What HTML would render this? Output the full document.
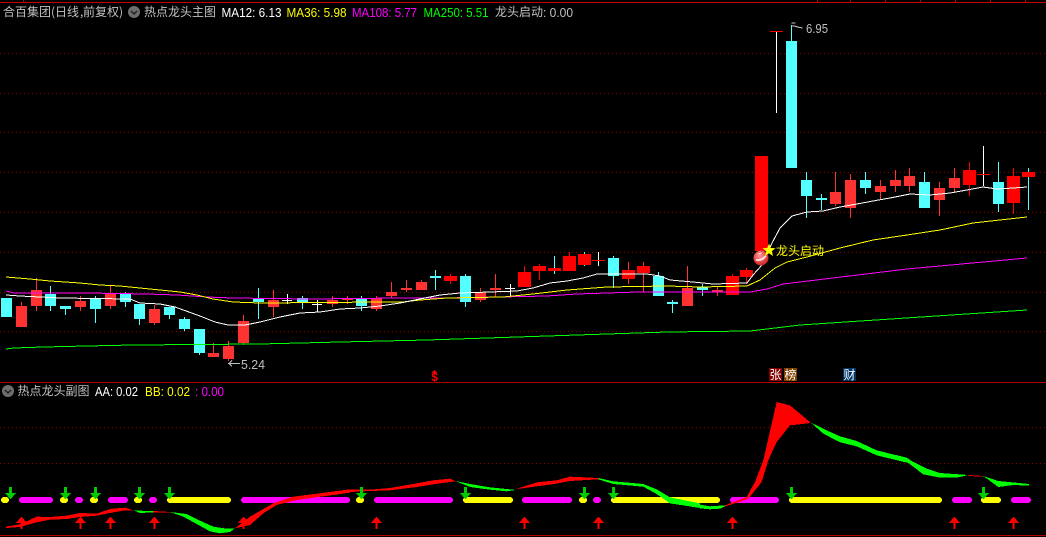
<!DOCTYPE html>
<html><head><meta charset="utf-8"><style>
html,body{margin:0;padding:0;background:#000;width:1046px;height:537px;overflow:hidden}
svg{display:block}
.t{font:12px "WenQuanYi Zen Hei","Noto Sans CJK SC",sans-serif;fill:#c0c0c0}
.m{font:13px "Liberation Sans",sans-serif}
</style></head><body>
<svg width="1046" height="537" viewBox="0 0 1046 537" xmlns="http://www.w3.org/2000/svg">
<defs>
<radialGradient id="b" cx=".42" cy=".35" r=".75"><stop offset="0" stop-color="#ff9a9a"/><stop offset=".6" stop-color="#e84040"/><stop offset="1" stop-color="#b02020"/></radialGradient>
<path id="dn" d="M-1 487h3v6h4l-5.500 6.500-5.500-6.500h4z" fill="#00cc00"/>
<path id="up" d="M-.5 529v-6h-4.500l5.500-6.500 5.500 6.500h-4.500v6z" fill="#ff0000"/>
</defs>
<rect width="1046" height="537" fill="#000"/>
<!-- borders -->
<g shape-rendering="crispEdges">
<rect x="0" y="2" width="1046" height="1" fill="#c00000"/>
<path d="M23.500 0v2M817.500 0v2M850.500 0v2M885.500 0v2M920.500 0v2M955.500 0v2M990.500 0v2M1025.500 0v2" stroke="#c00000"/>
<rect x="0" y="382" width="1046" height="1" fill="#b00000"/>
<rect x="0" y="535" width="1046" height="1" fill="#b00000"/>
<path d="M0 53.500H1046M0 93.500H1046M0 132.500H1046M0 172.500H1046M0 212.500H1046M0 252.500H1046M0 292.500H1046M0 331.500H1046M0 427.500H1046M0 463.500H1046" stroke="#8a0000" stroke-dasharray="1 3"/>
<!-- candle wicks -->
<path fill="none" stroke="#54ffff" d="M50.500 286V311M65.500 306V315M95.500 296V323M125.500 292V307M139.500 304V325M169.500 307V319M184.500 317V331M199.500 329V355M258.500 288V319M302.500 296V309M361.500 296V311M435.500 270V290M465.500 274V307M554.500 256V274M584.500 252V266M613.500 256V288M658.500 272V296M672.500 300V313M702.500 284V296M791.500 25V41M806.500 172V218M821.500 194V210M865.500 172V194M924.500 172V208M998.500 162V212M1028.500 168V210"/>
<path fill="none" stroke="#ff3232" d="M21.500 302V306M36.500 278V311M80.500 296V311M110.500 286V309M154.500 305V325M213.500 343V353M228.500 341V361M243.500 315V345M273.500 290V317M332.500 296V307M347.500 296V304M376.500 296V311M391.500 282V298M406.500 280V292M421.500 280V282M480.500 288V302M495.500 274V297M687.500 266V288M717.500 286V296M835.500 172V206M850.500 174V218M880.500 180V200M895.500 170V192M909.500 168V192M939.500 182V216M954.500 168V192M628.500 262V284M643.500 262V292"/>
<path fill="none" stroke="#ff0000" d="M450.500 274V284M524.500 266V272M539.500 264V280M569.500 252V256M732.500 274V276M746.500 268V284M969.500 162V196M1013.500 168V214"/>
<path fill="none" stroke="#fff" d="M287.500 294V304M282 300.500H292M317.500 300V312M312 304.500H322M510.500 284V296M505 288.500H515M598.500 252V266M776.500 31V113M983.500 146V186"/>
<!-- bodies -->
<path fill="#54ffff" d="M1 298h11v19h-11zM45 294h11v12h-11zM60 306h11v3h-11zM90 298h11v11h-11zM120 294h11v8h-11zM134 304h11v15h-11zM164 307h11v8h-11zM179 319h11v10h-11zM194 329h11v24h-11zM253 298h11v4h-11zM297 298h11v4h-11zM356 298h11v8h-11zM430 276h11v2h-11zM460 276h11v26h-11zM608 258h11v18h-11zM653 276h11v20h-11zM667 302h11v2h-11zM697 287h11v3h-11zM786 41h11v127h-11zM801 180h11v16h-11zM816 198h11v2h-11zM860 180h11v8h-11zM919 182h11v26h-11zM993 182h11v22h-11z"/>
<path fill="#ff3232" d="M16 306h11v21h-11zM31 290h11v16h-11zM75 301h11v6h-11zM105 293h11v13h-11zM149 309h11v14h-11zM208 353h11v4h-11zM223 346h11v13h-11zM238 321h11v22h-11zM268 300h11v7h-11zM327 300h11v4h-11zM342 298h11v2h-11zM371 298h11v11h-11zM386 292h11v4h-11zM401 288h11v2h-11zM416 282h11v8h-11zM475 292h11v8h-11zM490 288h11v2h-11zM682 288h11v18h-11zM712 290h11v2h-11zM830 192h11v12h-11zM845 180h11v28h-11zM875 186h11v6h-11zM890 180h11v6h-11zM904 176h11v10h-11zM934 188h11v12h-11zM949 178h11v10h-11z"/>
<path fill="#ff0000" d="M444 276h13v5h-13zM518 272h13v15h-13zM533 266h13v5h-13zM548 268h13v3h-13zM563 256h13v15h-13zM578 254h13v11h-13zM592 260h13v1h-13zM622 270h13v9h-13zM637 266h13v7h-13zM726 276h13v19h-13zM740 270h13v7h-13zM755 156h13v95h-13zM770 31h13v1h-13zM963 170h13v15h-13zM977 174h13v1h-13zM1007 176h13v27h-13zM1022 172h13v5h-13z"/>
<!-- moving averages -->
<polyline fill="none" stroke="#00ff00" points="6,349 14,348 43,347 87,346 133,345 260,344 340,342 427,340 487,338 577,335 667,332 750,331 767,329 800,325 1027,310"/>
<polyline fill="none" stroke="#ff00ff" points="6,291 14,293 87,293 147,294 177,295 207,297 233,298 310,299 400,298 443,298 500,297 547,296 577,294 607,293 637,292 750,292 767,289 783,284 800,282 907,269 1027,258"/>
<polyline fill="none" stroke="#ffff00" points="6,277 30,279 50,281 80,283 100,285 120,286 140,288 160,290 180,292 197,295 213,299 233,302 260,303 383,302 403,302 420,300 447,298 503,297 533,294 567,290 607,287 667,286 700,287 747,286 760,280 775,268 787,262 807,257 840,248 873,240 907,235 940,230 973,223 1027,217"/>
<polyline fill="none" stroke="#ffffff" points="6,295 20,296 60,298 130,299 140,303 160,304 175,307 200,316 215,322 228,325 245,325 260,322 280,317 300,313 320,312 340,309 360,308 380,306 400,303 420,299 440,295 460,293 490,292 517,291 533,288 550,283 567,281 583,278 597,274 620,274 647,274 660,276 670,280 693,282 713,284 747,283 753,275 762,265 772,243 780,228 792,216 807,212 823,211 840,207 857,204 873,201 890,198 910,194 930,195 950,193 967,190 983,187 997,189 1013,188 1027,187"/>
<!-- sub pane pills -->
<g fill="#ffff00"><rect x="1" y="497" width="8" height="6" rx="3"/><rect x="60" y="497" width="8" height="6" rx="3"/><rect x="90" y="497" width="8" height="6" rx="3"/><rect x="134" y="497" width="8" height="6" rx="3"/><rect x="167" y="497" width="64" height="6" rx="3"/><rect x="356" y="497" width="8" height="6" rx="3"/><rect x="463" y="497" width="50" height="6" rx="3"/><rect x="579" y="497" width="8" height="6" rx="3"/><rect x="611" y="497" width="109" height="6" rx="3"/><rect x="789" y="497" width="153" height="6" rx="3"/><rect x="981" y="497" width="20" height="6" rx="3"/></g>
<g fill="#ff00ff"><rect x="19" y="497" width="34" height="6" rx="3"/><rect x="75" y="497" width="8" height="6" rx="3"/><rect x="108" y="497" width="20" height="6" rx="3"/><rect x="149" y="497" width="8" height="6" rx="3"/><rect x="241" y="497" width="109" height="6" rx="3"/><rect x="374" y="497" width="79" height="6" rx="3"/><rect x="522" y="497" width="50" height="6" rx="3"/><rect x="593" y="497" width="8" height="6" rx="3"/><rect x="730" y="497" width="49" height="6" rx="3"/><rect x="952" y="497" width="20" height="6" rx="3"/><rect x="1011" y="497" width="20" height="6" rx="3"/></g>
<!-- ribbons -->
<g transform="translate(0,370) scale(.33333)">
<polygon fill="#ff0000" points="18,470 60,463 110,440 150,441 200,437 240,429 290,431 330,417 375,413 400,421 375,421 330,429 290,437 240,441 200,447 150,449 110,457 60,471 18,474"/>
<polygon fill="#00ff00" points="400,421 440,423 460,423 460,427 420,429"/>
<polygon fill="#ff0000" points="460,423 510,426 510,428 460,427"/>
<polygon fill="#00ff00" points="510,426 560,432 600,452 640,470 680,476 705,475 690,486 660,490 630,484 590,462 550,440"/>
<polygon fill="#ff0000" points="705,475 750,440 820,400 880,380 1050,358 1050,368 890,390 830,405 790,430 750,465"/>
</g>
<g transform="translate(350,440) scale(.33333)">
<polygon fill="#ff0000" points="0,149 60,149 120,144 200,130 250,121 300,116 318,124 300,126 250,133 200,141 120,151 60,153 0,156"/>
<polygon fill="#00ff00" points="316,123 360,132 420,142 490,149 497,150 470,154 420,149 360,141"/>
<polygon fill="#ff0000" points="495,148 560,127 620,121 660,110 745,114 745,118 660,123 620,131 560,139"/>
<polygon fill="#00ff00" points="745,114 790,124 880,132 920,148 960,172 1050,190 1050,204 960,190 920,162 880,140 790,132 745,118"/>
</g>
<g transform="translate(700,367) scale(.33333)">
<polygon fill="#00ff00" points="0,413 30,418 75,415 75,418 60,425 30,427 0,424"/>
<polygon fill="#ff0000" points="75,415 140,390 165,345 190,280 230,105 270,115 300,140 332,167 325,169 270,175 230,225 205,280 185,345 145,395 75,419"/>
<polygon fill="#00ff00" points="333,167 380,190 420,208 470,222 530,250 620,272 640,285 680,305 720,318 805,324 770,332 720,332 670,322 625,288 530,265 470,238 420,226 370,200"/>
<polygon fill="#ff0000" points="805,324 850,327 850,329 805,327"/>
<polygon fill="#00ff00" points="850,327 895,342 987,351 987,356 940,354 895,360"/>
</g>
<!-- arrows -->
<use href="#dn" x="10"/><use href="#dn" x="65"/><use href="#dn" x="95"/><use href="#dn" x="139"/><use href="#dn" x="169"/><use href="#dn" x="361"/><use href="#dn" x="465"/><use href="#dn" x="584"/><use href="#dn" x="613"/><use href="#dn" x="791"/><use href="#dn" x="983"/>
<use href="#up" x="21"/><use href="#up" x="80"/><use href="#up" x="110"/><use href="#up" x="154"/><use href="#up" x="243"/><use href="#up" x="376"/><use href="#up" x="524"/><use href="#up" x="598"/><use href="#up" x="732"/><use href="#up" x="954"/><use href="#up" x="1013"/>
<!-- badges -->
<rect x="769" y="368" width="13" height="13" fill="#800000"/><rect x="784" y="368" width="13" height="13" fill="#804000"/><rect x="843" y="368" width="13" height="13" fill="#003366"/>
</g>
<!-- annotations -->
<path d="M791.500 23h4M791.500 26h3l3 1 5 1" fill="none" stroke="#c0c0c0" shape-rendering="crispEdges"/>
<path d="M228 363.500h12M232 360.500l-3 3 3 3" fill="none" stroke="#c0c0c0" shape-rendering="crispEdges"/>
<text class="t m" x="806" y="33" textLength="22" lengthAdjust="spacingAndGlyphs">6.95</text>
<text class="t m" x="241" y="369" textLength="24" lengthAdjust="spacingAndGlyphs">5.24</text>
<circle cx="761" cy="258" r="7.500" fill="url(#b)"/>
<path d="M755.500 259q5 1 10-4l1 1.500q-4 5.500-10 4.500zM757 254.500q2-2 5-2l-1 1.500z" fill="#ffe8e8" opacity=".9"/>
<polygon fill="#ffff00" points="769,243.500 770.800,248 775.500,248.200 771.800,251.200 773,256 769,253.300 765,256 766.200,251.200 762.500,248.200 767.200,248"/>
<text class="t" x="776" y="255" style="fill:#ffff00">龙头启动</text>
<text x="431" y="381" style="font:bold 12px 'Liberation Mono',monospace;fill:#ff0000">$</text>
<path d="M434.500 370l-3 3h6z" fill="#ff0000"/>
<text class="t" x="769.500" y="379" style="fill:#fff">张</text>
<text class="t" x="784.500" y="379" style="fill:#fff">榜</text>
<text class="t" x="843.500" y="379" style="fill:#fff">财</text>
<!-- headers -->
<text class="t" x="3" y="16">合百集团(日线</text>
<text class="t" x="80" y="16">,</text>
<text class="t" x="83" y="16">前复权)</text>
<circle cx="134" cy="12" r="6" fill="#6e6e6e"/>
<path d="M131 11l3 3 3-3" fill="none" stroke="#222" stroke-width="1.500"/>
<text class="t" x="144" y="16">热点龙头主图</text>
<text class="t m" x="221.500" y="17" textLength="60" lengthAdjust="spacingAndGlyphs" style="fill:#fff">MA12: 6.13</text>
<text class="t m" x="286.500" y="17" textLength="60" lengthAdjust="spacingAndGlyphs" style="fill:#ffff00">MA36: 5.98</text>
<text class="t m" x="352" y="17" textLength="65" lengthAdjust="spacingAndGlyphs" style="fill:#ff00ff">MA108: 5.77</text>
<text class="t m" x="423.500" y="17" textLength="65" lengthAdjust="spacingAndGlyphs" style="fill:#00ff00">MA250: 5.51</text>
<text class="t" x="495" y="16">龙头启动</text>
<text class="t m" x="543" y="17" textLength="30" lengthAdjust="spacingAndGlyphs">: 0.00</text>
<circle cx="8" cy="391" r="6" fill="#6e6e6e"/>
<path d="M5 390l3 3 3-3" fill="none" stroke="#222" stroke-width="1.500"/>
<text class="t" x="17.500" y="395">热点龙头副图</text>
<text class="t m" x="95" y="396" textLength="43" lengthAdjust="spacingAndGlyphs" style="fill:#fff">AA: 0.02</text>
<text class="t m" x="145" y="396" textLength="45" lengthAdjust="spacingAndGlyphs" style="fill:#ffff00">BB: 0.02</text>
<text class="t m" x="195" y="396" textLength="29" lengthAdjust="spacingAndGlyphs" style="fill:#ff00ff">: 0.00</text>
</svg>
</body></html>
